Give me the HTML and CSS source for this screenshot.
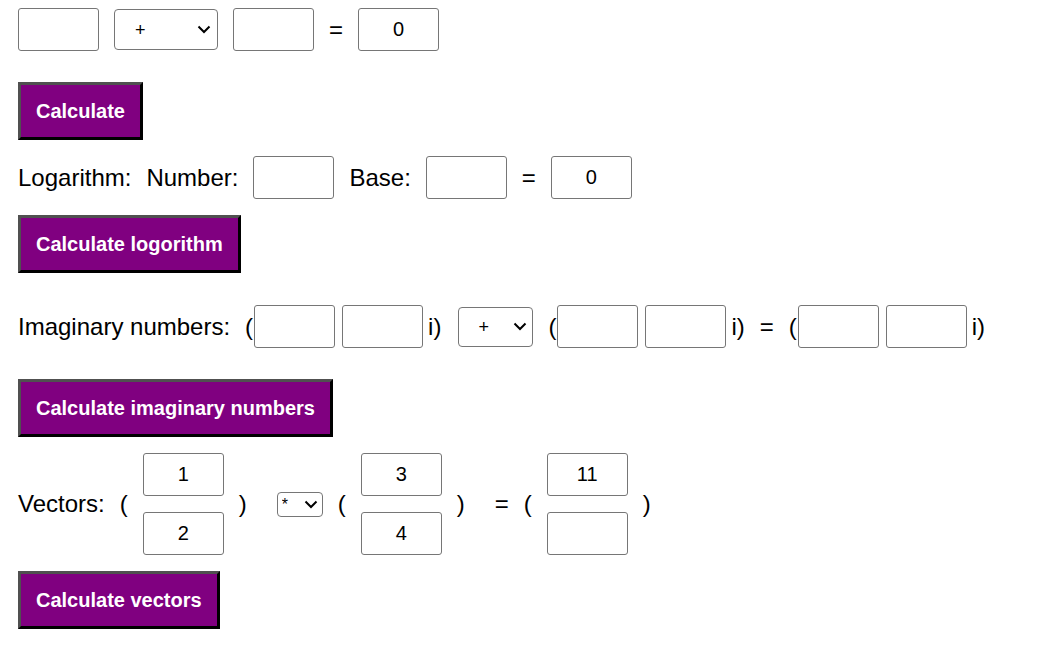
FILE: index.html
```html
<!DOCTYPE html>
<html lang="en">
<head>
<meta charset="utf-8">
<title>Calculator</title>
<link rel="stylesheet" href="styles.css">
</head>
<body>
<div class="page">
  <div class="row">
    <input class="num" type="text">
    <span class="select-wrap">
      <select class="op op-wide">
        <option>+</option><option>-</option><option>*</option><option>/</option>
      </select>
      <svg class="chev" width="14" height="9" viewBox="0 0 14 9" aria-hidden="true"><polyline points="1.5,1.5 7,7 12.5,1.5" fill="none" stroke="#000" stroke-width="2"/></svg>
    </span>
    <input class="num" type="text">
    <span class="sym">=</span>
    <input class="num" type="text" value="0">
  </div>
  <button class="btn spaced">Calculate</button>

  <div class="row">
    <span class="label">Logarithm:</span>
    <span class="label">Number:</span>
    <input class="num" type="text">
    <span class="label">Base:</span>
    <input class="num" type="text">
    <span class="sym">=</span>
    <input class="num" type="text" value="0">
  </div>
  <button class="btn">Calculate logorithm</button>

  <div class="row spaced-more">
    <span class="label">Imaginary numbers:</span>
    <span class="cgroup">
      <span class="paren">(</span>
      <input class="num" type="text">
      <input class="num second" type="text">
      <span class="paren unit">i)</span>
    </span>
    <span class="select-wrap nudge">
      <select class="op op-mid">
        <option>+</option><option>-</option><option>*</option><option>/</option>
      </select>
      <svg class="chev chev-mid" width="14" height="9" viewBox="0 0 14 9" aria-hidden="true"><polyline points="1.5,1.5 7,7 12.5,1.5" fill="none" stroke="#000" stroke-width="2"/></svg>
    </span>
    <span class="cgroup">
      <span class="paren">(</span>
      <input class="num" type="text">
      <input class="num second" type="text">
      <span class="paren unit">i)</span>
    </span>
    <span class="sym">=</span>
    <span class="cgroup">
      <span class="paren">(</span>
      <input class="num" type="text">
      <input class="num second" type="text">
      <span class="paren unit">i)</span>
    </span>
  </div>
  <button class="btn spaced">Calculate imaginary numbers</button>

  <div class="row">
    <span class="label">Vectors:</span>
    <span class="vgroup">
      <span class="paren">(</span>
      <span class="vcol">
        <input class="num" type="text" value="1">
        <input class="num" type="text" value="2">
      </span>
      <span class="paren">)</span>
    </span>
    <span class="select-wrap wide-gap">
      <select class="op op-small">
        <option>*</option><option>+</option><option>-</option>
      </select>
      <svg class="chev chev-small" width="14" height="9" viewBox="0 0 14 9" aria-hidden="true"><polyline points="1.5,1.5 7,7 12.5,1.5" fill="none" stroke="#000" stroke-width="2"/></svg>
    </span>
    <span class="vgroup">
      <span class="paren">(</span>
      <span class="vcol">
        <input class="num" type="text" value="3">
        <input class="num" type="text" value="4">
      </span>
      <span class="paren">)</span>
    </span>
    <span class="sym wide-gap">=</span>
    <span class="vgroup">
      <span class="paren">(</span>
      <span class="vcol">
        <input class="num" type="text" value="11">
        <input class="num" type="text">
      </span>
      <span class="paren">)</span>
    </span>
  </div>
  <button class="btn">Calculate vectors</button>
</div>
</body>
</html>
```

FILE: styles.css
```css
html, body {
  margin: 0;
  padding: 0;
  background: #ffffff;
}

body {
  font-family: "Liberation Sans", Arial, sans-serif;
  color: #000000;
}

.page {
  display: flex;
  flex-direction: column;
  align-items: flex-start;
  gap: 16px;
  padding: 8px 18px;
}

.row {
  display: flex;
  align-items: center;
  gap: 15px;
  font-size: 24px;
}

.label,
.sym,
.paren {
  font-size: 24px;
  line-height: 28px;
  white-space: nowrap;
}

.num {
  box-sizing: border-box;
  width: 81px;
  height: 43px;
  margin: 0;
  padding: 0 4px;
  border: 1px solid #767676;
  border-radius: 3px;
  background: #ffffff;
  font-family: "Liberation Sans", Arial, sans-serif;
  font-size: 20px;
  color: #000000;
  text-align: center;
}

.select-wrap {
  position: relative;
  display: flex;
  align-items: center;
}

.nudge {
  margin-left: 2px;
}

.op {
  -webkit-appearance: none;
  appearance: none;
  box-sizing: border-box;
  margin: 0;
  border: 1px solid #767676;
  border-radius: 4px;
  background-color: #ffffff;
  color: #000000;
  font-family: "Liberation Sans", Arial, sans-serif;
}

.op-wide {
  width: 104px;
  height: 41px;
  padding: 0 0 0 20px;
  font-size: 18px;
}

.op-mid {
  width: 75px;
  height: 40px;
  padding: 0 0 0 19px;
  font-size: 18px;
}

.op-small {
  width: 46px;
  height: 25px;
  padding: 0 0 0 4px;
  font-size: 16px;
}

.chev {
  position: absolute;
  right: 7px;
  top: 50%;
  margin-top: -5px;
  pointer-events: none;
}

.chev-mid {
  right: 6px;
}

.chev-small {
  right: 5px;
  margin-top: -4px;
}

.wide-gap {
  margin-left: 15px;
}

.cgroup {
  display: flex;
  align-items: center;
}

.cgroup .num {
  margin-left: 1px;
}

.cgroup .second {
  margin-left: 7px;
}

.cgroup .unit {
  margin-left: 5px;
}

.vgroup {
  display: flex;
  align-items: center;
  gap: 15px;
}

.vcol {
  display: flex;
  flex-direction: column;
  gap: 16px;
}

.btn {
  box-sizing: border-box;
  margin: 0;
  padding: 14px 15px;
  border-style: solid;
  border-width: 3px;
  border-color: #505050 #000000 #000000 #505050;
  background: #800080;
  color: #ffffff;
  font-family: "Liberation Sans", Arial, sans-serif;
  font-size: 20px;
  font-weight: bold;
  line-height: 24px;
  cursor: pointer;
}

.spaced,
.btn.spaced {
  margin-top: 15px;
}

.spaced-more {
  margin-top: 16px;
}
```
